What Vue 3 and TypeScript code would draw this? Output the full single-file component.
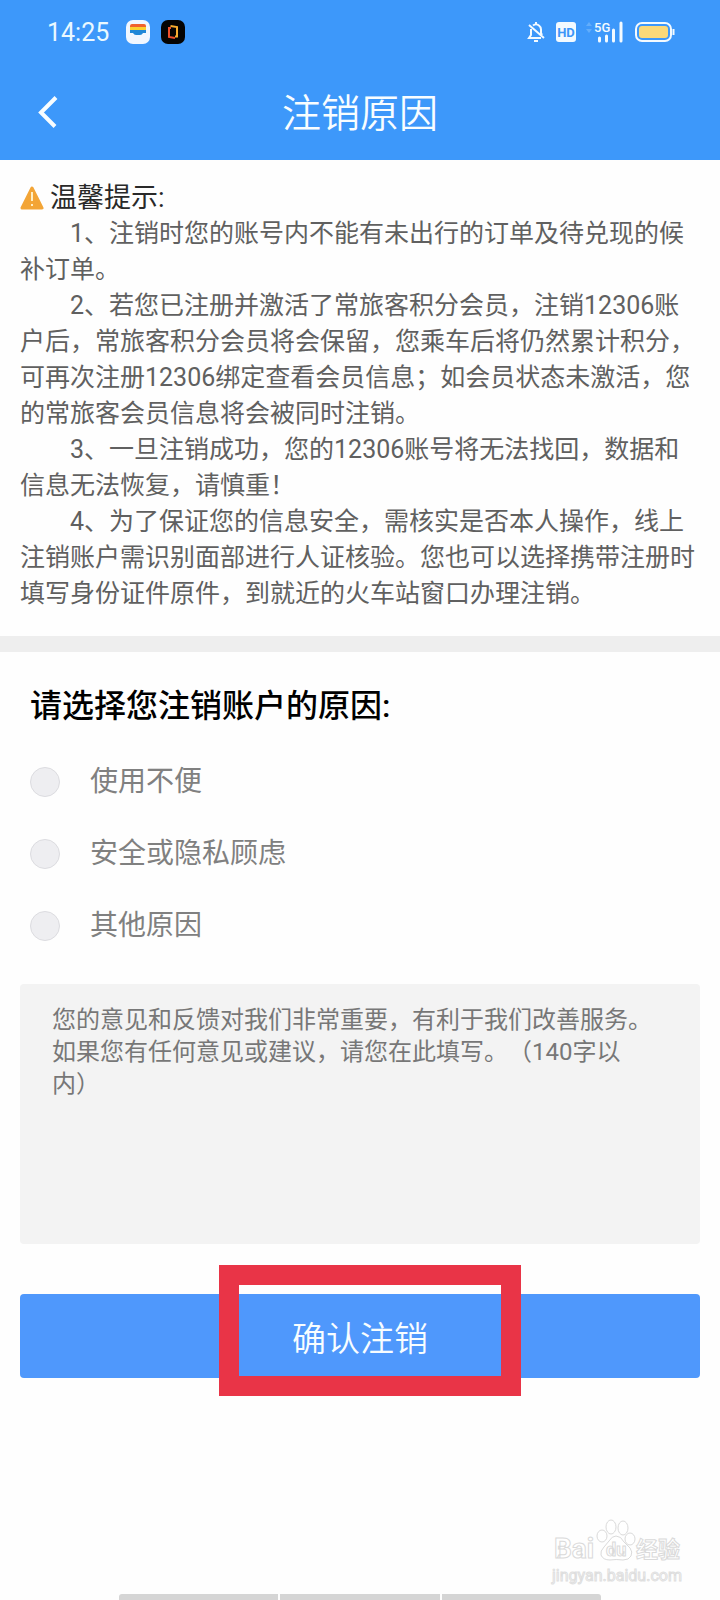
<script setup lang="ts">
import { ref } from 'vue'

const notices: string[] = [
  '1、注销时您的账号内不能有未出行的订单及待兑现的候补订单。',
  '2、若您已注册并激活了常旅客积分会员，注销12306账户后，常旅客积分会员将会保留，您乘车后将仍然累计积分，可再次注册12306绑定查看会员信息；如会员状态未激活，您的常旅客会员信息将会被同时注销。',
  '3、一旦注销成功，您的12306账号将无法找回，数据和信息无法恢复，请慎重！',
  '4、为了保证您的信息安全，需核实是否本人操作，线上注销账户需识别面部进行人证核验。您也可以选择携带注册时填写身份证件原件，到就近的火车站窗口办理注销。',
]
const reasons: string[] = ['使用不便', '安全或隐私顾虑', '其他原因']
const reason = ref<string>('')
const feedback = ref<string>('')
</script>

<template>
  <div class="page" lang="zh-CN">
    <header class="top">
      <div class="status">
        <span class="time">14:25</span>
        <svg class="app-icon" width="24" height="24" viewBox="0 0 24 24" aria-hidden="true">
          <rect width="24" height="24" rx="7" fill="#f1f7ff" />
          <path d="M4 7V6q0-2 2-2h12q2 0 2 2v1z" fill="#f0622d" />
          <path d="M4 7h16v3H4z" fill="#fbd02f" />
          <path d="M4 10h16v3h-3q-1 2-3 2h-4q-2 0-3-2H4z" fill="#2088d8" />
        </svg>
        <svg class="app-icon second" width="24" height="24" viewBox="0 0 24 24" aria-hidden="true">
          <rect width="24" height="24" rx="7" fill="#050403" />
          <path d="M10 8H8v9l6 1" fill="none" stroke="#ee4f2b" stroke-width="2" />
          <path d="M9.500 6l6.500 1v9.500h-2" fill="none" stroke="#f8ad2f" stroke-width="2" />
        </svg>
        <div class="signals">
          <svg width="18" height="22" viewBox="0 0 18 22" fill="none" stroke="#f3faff" stroke-width="2" aria-hidden="true">
            <path d="M6 4.500Q9 2 12 4.500q2 1.500 2 4V12l1 2M4 8v6l-2 3h12M2 4l15 13M9 1v2" />
            <path d="M7 20h4" />
          </svg>
          <svg class="hd" width="20" height="20" viewBox="0 0 20 20" aria-hidden="true">
            <rect width="20" height="20" rx="3" fill="#f3faff" />
            <text x="10" y="15" text-anchor="middle" font-size="13" font-weight="700" fill="#3d96f8">HD</text>
          </svg>
          <svg class="network" width="38" height="22" viewBox="0 0 38 22" aria-hidden="true">
            <path d="M0 5l3-4 3 4zM0 8l3 4 3-4z" fill="#62adfb" />
            <text x="8" y="11" font-size="13" font-weight="500" fill="#f3faff">5G</text>
            <path d="M13.500 17v3M20.500 15v5M27.500 9v11M35 2v18" stroke="#f3faff" stroke-width="3" stroke-linecap="round" />
          </svg>
          <svg class="battery" width="40" height="20" viewBox="0 0 40 20" aria-hidden="true">
            <rect x="1" y="1" width="35" height="18" rx="6" fill="none" stroke="#f3faff" stroke-width="2" />
            <rect x="4" y="4" width="29" height="12" rx="3" fill="#fbd979" />
            <path d="M38.500 7v6" stroke="#f3faff" stroke-width="2" />
          </svg>
        </div>
      </div>
      <div class="nav">
        <button class="back" type="button" aria-label="返回">
          <svg width="24" height="32" viewBox="0 0 24 32" fill="none" stroke="#f8fdff" stroke-width="4" aria-hidden="true">
            <path d="M20 1.500L5 16.500l14 14" />
          </svg>
        </button>
        <h1>注销原因</h1>
      </div>
    </header>

    <main>
      <section class="notice">
        <h2>
          <svg width="24" height="24" viewBox="0 0 24 24" aria-hidden="true">
            <path d="M12 2L22 22H2z" fill="#f3a536" stroke="#f3a536" stroke-width="3" stroke-linejoin="round" />
            <path d="M12 6v9M12 18v2" stroke="#ffefc4" stroke-width="2" />
          </svg>
          <span>温馨提示:</span>
        </h2>
        <p v-for="notice in notices" :key="notice">{{ notice }}</p>
      </section>

      <form class="form" @submit.prevent>
        <fieldset>
          <legend>请选择您注销账户的原因:</legend>
          <label v-for="item in reasons" :key="item" class="option">
            <input v-model="reason" type="radio" name="reason" :value="item" />
            <span>{{ item }}</span>
          </label>
        </fieldset>
        <textarea
          v-model="feedback"
          maxlength="140"
          aria-label="意见和反馈"
          placeholder="您的意见和反馈对我们非常重要，有利于我们改善服务。如果您有任何意见或建议，请您在此填写。（140字以内）"
        ></textarea>
        <div class="action">
          <button class="submit" type="submit">确认注销</button>
          <div class="highlight" aria-hidden="true"></div>
        </div>
      </form>
    </main>

    <footer>
      <div class="watermark">
        <svg width="132" height="50" viewBox="0 0 132 50" fill="#fff" stroke="#dadada" aria-hidden="true">
          <text x="2" y="42" font-size="28" font-weight="700">Bai</text>
          <ellipse cx="50" cy="20" rx="5" ry="6" />
          <ellipse cx="59" cy="11" rx="5" ry="7" />
          <ellipse cx="71" cy="12" rx="5" ry="7" />
          <ellipse cx="78" cy="23" rx="5" ry="6" />
          <path d="M64 20q5 0 8 6l6 6q3 4 1 8-2 4-8 4-7-1-13 0-7 0-9-5-1-4 3-8l5-6q3-5 7-5z" />
          <text x="54" y="40" font-size="18" font-weight="700">du</text>
          <text x="84" y="41" font-size="22" font-weight="700">经验</text>
        </svg>
        <span>jingyan.baidu.com</span>
      </div>
      <div class="home-bar"><i></i><i></i><i></i></div>
    </footer>
  </div>
</template>

<style>
body {
  margin: 0;
  background: #fefefe;
}
</style>

<style scoped>
.page {
  min-height: 100vh;
  display: flex;
  flex-direction: column;
  font-family: Roboto, "Noto Sans CJK SC", sans-serif;
  font-weight: 400;
  text-spacing-trim: space-all;
}
svg {
  display: block;
  flex: none;
}
.top {
  background: #3d98fa;
  color: #f8fdff;
}
.status {
  height: 64px;
  padding: 0 45px 0 47px;
  display: flex;
  align-items: center;
}
.time {
  font-size: 25px;
  color: #eaf8ff;
}
.app-icon {
  margin-left: 17px;
}
.app-icon.second {
  margin-left: 11px;
}
.signals {
  margin-left: auto;
  display: flex;
  align-items: center;
}
.hd {
  margin-left: 11px;
}
.network {
  margin-left: 10px;
}
.battery {
  margin-left: 11px;
}
.nav {
  height: 96px;
  display: grid;
  grid-template-columns: 72px 1fr 72px;
  align-items: center;
}
.back {
  height: 64px;
  padding: 0 0 0 36px;
  border: 0;
  background: none;
}
h1 {
  margin: 0;
  padding-top: 4px;
  text-align: center;
  font-size: 39px;
  line-height: 56px;
  font-weight: 350;
}
.notice {
  padding: 20px 20px 24px;
  border-bottom: 16px solid #eee;
  color: #606060;
  font-size: 25px;
  line-height: 36px;
}
h2 {
  margin: 0;
  display: flex;
  align-items: center;
  gap: 6px;
  color: #292929;
  font-size: 27px;
  line-height: 36px;
  font-weight: 400;
}
.notice p {
  margin: 0;
  text-indent: 2em;
}
.form {
  padding: 34px 20px 0;
}
fieldset {
  margin: 0;
  padding: 0 10px;
  border: 0;
}
legend {
  padding: 0;
  margin-bottom: 20px;
  color: #000;
  font-size: 32px;
  line-height: 40px;
  font-weight: 500;
}
.option {
  height: 72px;
  display: flex;
  align-items: center;
  gap: 30px;
  color: #808080;
  font-size: 28px;
}
.option span {
  padding-bottom: 6px;
}
.option input {
  appearance: none;
  box-sizing: border-box;
  width: 30px;
  height: 30px;
  margin: 0;
  border: 1px solid #dcdce0;
  border-radius: 50%;
  background: #eeeef1;
}
.option input:checked {
  border: 8px solid #4f98fc;
  background: #fff;
}
textarea {
  display: block;
  box-sizing: border-box;
  width: 100%;
  height: 260px;
  margin-top: 22px;
  padding: 20px 44px 20px 32px;
  border: 0;
  border-radius: 4px;
  outline: 0;
  resize: none;
  background: #f3f3f3;
  color: #333;
  font: inherit;
  font-size: 24px;
  line-height: 32px;
}
textarea::placeholder {
  color: #777;
  opacity: 1;
}
.action {
  position: relative;
  margin-top: 50px;
}
.submit {
  display: block;
  width: 100%;
  height: 84px;
  padding: 0;
  border: 0;
  border-radius: 4px;
  background: #4f98fc;
  color: #f8fdff;
  font: inherit;
  font-size: 34px;
  font-weight: 350;
}
.highlight {
  position: absolute;
  inset: -29px 179px -18px 199px;
  border: 20px solid #e93447;
  pointer-events: none;
}
footer {
  margin-top: auto;
}
.watermark {
  width: 132px;
  margin: 0 36px 8px auto;
  color: #fff;
  font-size: 16px;
  line-height: 20px;
  -webkit-text-stroke: 1px #dedede;
}
.home-bar {
  width: 67%;
  height: 6px;
  margin: 0 auto;
  display: flex;
  gap: 2px;
  border-radius: 3px 3px 0 0;
  overflow: hidden;
}
.home-bar i {
  flex: 1;
  background: #d5d5d5;
}
</style>
